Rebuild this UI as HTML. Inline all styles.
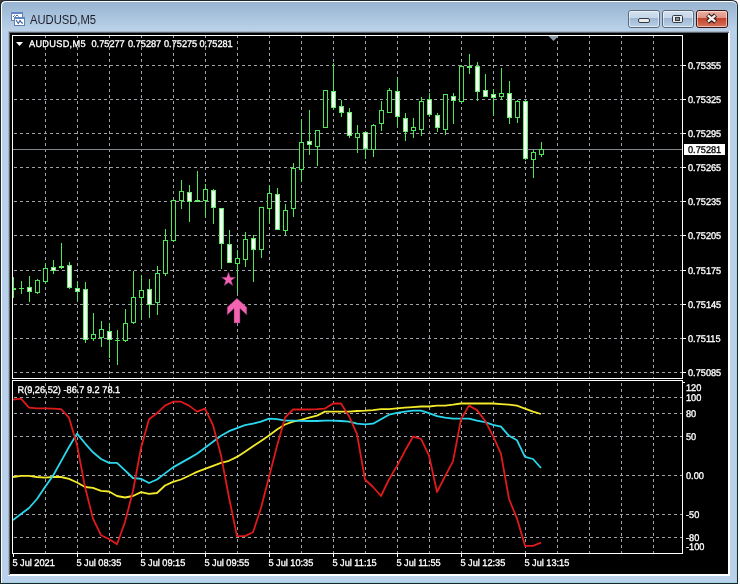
<!DOCTYPE html>
<html><head><meta charset="utf-8"><style>
html,body{margin:0;padding:0;width:740px;height:584px;overflow:hidden;background:#f0f0f0}
svg text{font-family:"Liberation Sans",sans-serif}
svg{will-change:transform}
</style></head><body>
<svg width="740" height="584" viewBox="0 0 740 584" style="position:absolute;left:0;top:0">
<defs><linearGradient id="tb" x1="0" y1="0" x2="0" y2="1"><stop offset="0" stop-color="#98b4d0"/><stop offset="1" stop-color="#bbd3ea"/></linearGradient><linearGradient id="bmin" x1="0" y1="0" x2="0" y2="1"><stop offset="0" stop-color="#d3e1f0"/><stop offset="0.45" stop-color="#c4d6ea"/><stop offset="0.46" stop-color="#9fb7d3"/><stop offset="1" stop-color="#bcd2ea"/></linearGradient><linearGradient id="bcls" x1="0" y1="0" x2="0" y2="1"><stop offset="0" stop-color="#eab0a4"/><stop offset="0.45" stop-color="#de9484"/><stop offset="0.46" stop-color="#c2412a"/><stop offset="1" stop-color="#d8775e"/></linearGradient></defs>
<rect x="0" y="0" width="740" height="584" fill="#ffffff"/>
<rect x="0" y="0" width="8" height="584" fill="#3a3a3a"/>
<path d="M0,584 L0,6 Q0,0 6,0 L732,0 Q738,0 738,6 L738,584 Z" fill="#1a2630"/>
<path d="M1,583 L1,6 Q1,1 6,1 L731,1 Q737,1 737,6 L737,583 Z" fill="#ffffff"/>
<path d="M2,582 L2,7 Q2,2 7,2 L730,2 Q737,2 737,7 L737,582 Z" fill="#b9d1ea"/>
<path d="M2,31 L2,7 Q2,2 7,2 L730,2 Q737,2 737,7 L737,31 Z" fill="url(#tb)"/>
<rect x="736" y="6" width="1" height="577" fill="#a8d4e0"/>
<rect x="2" y="582" width="735" height="1" fill="#a0d2dc"/>
<rect x="8" y="31" width="722" height="545" fill="#ffffff"/>
<rect x="8" y="31" width="721" height="1" fill="#a6b4c2"/>
<rect x="8" y="31" width="1" height="544" fill="#a6b4c2"/>
<rect x="9" y="32" width="720" height="1" fill="#5a6470"/>
<rect x="9" y="32" width="1" height="543" fill="#5a6470"/>
<rect x="10" y="33" width="718" height="541" fill="#000000"/>
<text x="30" y="23.6" font-size="12" fill="#1e1e2a" textLength="66" lengthAdjust="spacingAndGlyphs">AUDUSD,M5</text>
<g shape-rendering="crispEdges"><rect x="11.5" y="12.5" width="11" height="8" fill="#ffffff" stroke="#5d7fb6"/><rect x="11" y="12" width="12" height="2" fill="#5f86c8"/><rect x="14.5" y="17.5" width="10" height="8" fill="#ffffff" stroke="#5d7fb6"/><rect x="14" y="17" width="11" height="2" fill="#5f86c8"/></g>
<polyline points="13,17 14.5,15.5 15.5,16.5 17,15 18.5,16.5" fill="none" stroke="#4a6aa0" stroke-width="1"/>
<polyline points="16,20 18.3,23.5 20,20.5 21.5,22.5 22.8,23.5" fill="none" stroke="#3f5f98" stroke-width="1.1"/>
<rect x="628.5" y="10.5" width="31" height="17" rx="2.5" fill="url(#bmin)" stroke="#5c6a7c"/>
<rect x="629.5" y="11.5" width="29" height="15" rx="1.5" fill="none" stroke="#ffffff" stroke-opacity="0.55"/>
<rect x="662.5" y="10.5" width="31" height="17" rx="2.5" fill="url(#bmin)" stroke="#5c6a7c"/>
<rect x="663.5" y="11.5" width="29" height="15" rx="1.5" fill="none" stroke="#ffffff" stroke-opacity="0.55"/>
<rect x="696.5" y="10.5" width="31" height="17" rx="2.5" fill="url(#bcls)" stroke="#3a1010"/>
<rect x="697.5" y="11.5" width="29" height="15" rx="1.5" fill="none" stroke="#ffffff" stroke-opacity="0.55"/>
<rect x="638.5" y="18.5" width="11" height="4" rx="1.5" fill="#ececec" stroke="#333a44"/>
<rect x="672.5" y="15.5" width="10" height="7" rx="1.2" fill="#ececec" stroke="#333a44"/>
<rect x="675.5" y="17.5" width="4" height="3" fill="#8090a0" stroke="#333a44" stroke-width="1"/>
<g stroke-linecap="butt"><path d="M707.6,15 L715.6,22 M715.6,15 L707.6,22" stroke="#2e1518" stroke-width="4.4"/><path d="M707.9,15.3 L715.3,21.7 M715.3,15.3 L707.9,21.7" stroke="#f4f0f0" stroke-width="2.4"/></g>
<g shape-rendering="crispEdges">
<line x1="13" y1="65.5" x2="682" y2="65.5" stroke="#9ea3aa" stroke-width="1" stroke-dasharray="3 3" stroke-dashoffset="5"/>
<line x1="13" y1="99.5" x2="682" y2="99.5" stroke="#9ea3aa" stroke-width="1" stroke-dasharray="3 3" stroke-dashoffset="5"/>
<line x1="13" y1="133.5" x2="682" y2="133.5" stroke="#9ea3aa" stroke-width="1" stroke-dasharray="3 3" stroke-dashoffset="5"/>
<line x1="13" y1="167.5" x2="682" y2="167.5" stroke="#9ea3aa" stroke-width="1" stroke-dasharray="3 3" stroke-dashoffset="5"/>
<line x1="13" y1="201.5" x2="682" y2="201.5" stroke="#9ea3aa" stroke-width="1" stroke-dasharray="3 3" stroke-dashoffset="5"/>
<line x1="13" y1="235.5" x2="682" y2="235.5" stroke="#9ea3aa" stroke-width="1" stroke-dasharray="3 3" stroke-dashoffset="5"/>
<line x1="13" y1="270.5" x2="682" y2="270.5" stroke="#9ea3aa" stroke-width="1" stroke-dasharray="3 3" stroke-dashoffset="5"/>
<line x1="13" y1="304.5" x2="682" y2="304.5" stroke="#9ea3aa" stroke-width="1" stroke-dasharray="3 3" stroke-dashoffset="5"/>
<line x1="13" y1="338.5" x2="682" y2="338.5" stroke="#9ea3aa" stroke-width="1" stroke-dasharray="3 3" stroke-dashoffset="5"/>
<line x1="13" y1="372.5" x2="682" y2="372.5" stroke="#9ea3aa" stroke-width="1" stroke-dasharray="3 3" stroke-dashoffset="5"/>
<line x1="45.5" y1="36" x2="45.5" y2="378" stroke="#9ea3aa" stroke-width="1" stroke-dasharray="3 3" stroke-dashoffset="1"/>
<line x1="77.5" y1="36" x2="77.5" y2="378" stroke="#9ea3aa" stroke-width="1" stroke-dasharray="3 3" stroke-dashoffset="1"/>
<line x1="109.5" y1="36" x2="109.5" y2="378" stroke="#9ea3aa" stroke-width="1" stroke-dasharray="3 3" stroke-dashoffset="1"/>
<line x1="141.5" y1="36" x2="141.5" y2="378" stroke="#9ea3aa" stroke-width="1" stroke-dasharray="3 3" stroke-dashoffset="1"/>
<line x1="173.5" y1="36" x2="173.5" y2="378" stroke="#9ea3aa" stroke-width="1" stroke-dasharray="3 3" stroke-dashoffset="1"/>
<line x1="205.5" y1="36" x2="205.5" y2="378" stroke="#9ea3aa" stroke-width="1" stroke-dasharray="3 3" stroke-dashoffset="1"/>
<line x1="237.5" y1="36" x2="237.5" y2="378" stroke="#9ea3aa" stroke-width="1" stroke-dasharray="3 3" stroke-dashoffset="1"/>
<line x1="269.5" y1="36" x2="269.5" y2="378" stroke="#9ea3aa" stroke-width="1" stroke-dasharray="3 3" stroke-dashoffset="1"/>
<line x1="301.5" y1="36" x2="301.5" y2="378" stroke="#9ea3aa" stroke-width="1" stroke-dasharray="3 3" stroke-dashoffset="1"/>
<line x1="333.5" y1="36" x2="333.5" y2="378" stroke="#9ea3aa" stroke-width="1" stroke-dasharray="3 3" stroke-dashoffset="1"/>
<line x1="365.5" y1="36" x2="365.5" y2="378" stroke="#9ea3aa" stroke-width="1" stroke-dasharray="3 3" stroke-dashoffset="1"/>
<line x1="397.5" y1="36" x2="397.5" y2="378" stroke="#9ea3aa" stroke-width="1" stroke-dasharray="3 3" stroke-dashoffset="1"/>
<line x1="429.5" y1="36" x2="429.5" y2="378" stroke="#9ea3aa" stroke-width="1" stroke-dasharray="3 3" stroke-dashoffset="1"/>
<line x1="461.5" y1="36" x2="461.5" y2="378" stroke="#9ea3aa" stroke-width="1" stroke-dasharray="3 3" stroke-dashoffset="1"/>
<line x1="493.5" y1="36" x2="493.5" y2="378" stroke="#9ea3aa" stroke-width="1" stroke-dasharray="3 3" stroke-dashoffset="1"/>
<line x1="525.5" y1="36" x2="525.5" y2="378" stroke="#9ea3aa" stroke-width="1" stroke-dasharray="3 3" stroke-dashoffset="1"/>
<line x1="557.5" y1="36" x2="557.5" y2="378" stroke="#9ea3aa" stroke-width="1" stroke-dasharray="3 3" stroke-dashoffset="1"/>
<line x1="589.5" y1="36" x2="589.5" y2="378" stroke="#9ea3aa" stroke-width="1" stroke-dasharray="3 3" stroke-dashoffset="1"/>
<line x1="621.5" y1="36" x2="621.5" y2="378" stroke="#9ea3aa" stroke-width="1" stroke-dasharray="3 3" stroke-dashoffset="1"/>
<line x1="653.5" y1="36" x2="653.5" y2="378" stroke="#9ea3aa" stroke-width="1" stroke-dasharray="3 3" stroke-dashoffset="1"/>
<line x1="13" y1="397.5" x2="682" y2="397.5" stroke="#9ea3aa" stroke-width="1" stroke-dasharray="3 3" stroke-dashoffset="5"/>
<line x1="13" y1="413.5" x2="682" y2="413.5" stroke="#9ea3aa" stroke-width="1" stroke-dasharray="3 3" stroke-dashoffset="5"/>
<line x1="13" y1="436.5" x2="682" y2="436.5" stroke="#9ea3aa" stroke-width="1" stroke-dasharray="3 3" stroke-dashoffset="5"/>
<line x1="13" y1="475.5" x2="682" y2="475.5" stroke="#9ea3aa" stroke-width="1" stroke-dasharray="3 3" stroke-dashoffset="5"/>
<line x1="13" y1="514.5" x2="682" y2="514.5" stroke="#9ea3aa" stroke-width="1" stroke-dasharray="3 3" stroke-dashoffset="5"/>
<line x1="13" y1="537.5" x2="682" y2="537.5" stroke="#9ea3aa" stroke-width="1" stroke-dasharray="3 3" stroke-dashoffset="5"/>
<line x1="45.5" y1="382" x2="45.5" y2="553" stroke="#9ea3aa" stroke-width="1" stroke-dasharray="3 3" stroke-dashoffset="5"/>
<line x1="77.5" y1="382" x2="77.5" y2="553" stroke="#9ea3aa" stroke-width="1" stroke-dasharray="3 3" stroke-dashoffset="5"/>
<line x1="109.5" y1="382" x2="109.5" y2="553" stroke="#9ea3aa" stroke-width="1" stroke-dasharray="3 3" stroke-dashoffset="5"/>
<line x1="141.5" y1="382" x2="141.5" y2="553" stroke="#9ea3aa" stroke-width="1" stroke-dasharray="3 3" stroke-dashoffset="5"/>
<line x1="173.5" y1="382" x2="173.5" y2="553" stroke="#9ea3aa" stroke-width="1" stroke-dasharray="3 3" stroke-dashoffset="5"/>
<line x1="205.5" y1="382" x2="205.5" y2="553" stroke="#9ea3aa" stroke-width="1" stroke-dasharray="3 3" stroke-dashoffset="5"/>
<line x1="237.5" y1="382" x2="237.5" y2="553" stroke="#9ea3aa" stroke-width="1" stroke-dasharray="3 3" stroke-dashoffset="5"/>
<line x1="269.5" y1="382" x2="269.5" y2="553" stroke="#9ea3aa" stroke-width="1" stroke-dasharray="3 3" stroke-dashoffset="5"/>
<line x1="301.5" y1="382" x2="301.5" y2="553" stroke="#9ea3aa" stroke-width="1" stroke-dasharray="3 3" stroke-dashoffset="5"/>
<line x1="333.5" y1="382" x2="333.5" y2="553" stroke="#9ea3aa" stroke-width="1" stroke-dasharray="3 3" stroke-dashoffset="5"/>
<line x1="365.5" y1="382" x2="365.5" y2="553" stroke="#9ea3aa" stroke-width="1" stroke-dasharray="3 3" stroke-dashoffset="5"/>
<line x1="397.5" y1="382" x2="397.5" y2="553" stroke="#9ea3aa" stroke-width="1" stroke-dasharray="3 3" stroke-dashoffset="5"/>
<line x1="429.5" y1="382" x2="429.5" y2="553" stroke="#9ea3aa" stroke-width="1" stroke-dasharray="3 3" stroke-dashoffset="5"/>
<line x1="461.5" y1="382" x2="461.5" y2="553" stroke="#9ea3aa" stroke-width="1" stroke-dasharray="3 3" stroke-dashoffset="5"/>
<line x1="493.5" y1="382" x2="493.5" y2="553" stroke="#9ea3aa" stroke-width="1" stroke-dasharray="3 3" stroke-dashoffset="5"/>
<line x1="525.5" y1="382" x2="525.5" y2="553" stroke="#9ea3aa" stroke-width="1" stroke-dasharray="3 3" stroke-dashoffset="5"/>
<line x1="557.5" y1="382" x2="557.5" y2="553" stroke="#9ea3aa" stroke-width="1" stroke-dasharray="3 3" stroke-dashoffset="5"/>
<line x1="589.5" y1="382" x2="589.5" y2="553" stroke="#9ea3aa" stroke-width="1" stroke-dasharray="3 3" stroke-dashoffset="5"/>
<line x1="621.5" y1="382" x2="621.5" y2="553" stroke="#9ea3aa" stroke-width="1" stroke-dasharray="3 3" stroke-dashoffset="5"/>
<line x1="653.5" y1="382" x2="653.5" y2="553" stroke="#9ea3aa" stroke-width="1" stroke-dasharray="3 3" stroke-dashoffset="5"/>
</g>
<rect x="13" y="149" width="669" height="1" fill="#80878f"/>
<g shape-rendering="crispEdges">
<rect x="13" y="277" width="1" height="21" fill="#4ee654"/>
<rect x="11" y="288" width="5" height="2" fill="#4ee654"/>
<rect x="21" y="281" width="1" height="13" fill="#4ee654"/>
<rect x="19" y="288" width="5" height="1" fill="#4ee654"/>
<rect x="29" y="276" width="1" height="26" fill="#4ee654"/>
<rect x="27" y="287" width="5" height="5" fill="#62ec68"/>
<rect x="28" y="288" width="3" height="3" fill="#f2fff2"/>
<rect x="37" y="279" width="1" height="15" fill="#4ee654"/>
<rect x="35" y="280" width="5" height="13" fill="#4ee654"/>
<rect x="36" y="281" width="3" height="11" fill="#000000"/>
<rect x="45" y="263" width="1" height="21" fill="#4ee654"/>
<rect x="43" y="268" width="5" height="14" fill="#4ee654"/>
<rect x="44" y="269" width="3" height="12" fill="#000000"/>
<rect x="53" y="260" width="1" height="14" fill="#4ee654"/>
<rect x="51" y="267" width="5" height="4" fill="#62ec68"/>
<rect x="52" y="268" width="3" height="2" fill="#f2fff2"/>
<rect x="61" y="243" width="1" height="26" fill="#4ee654"/>
<rect x="59" y="266" width="5" height="2" fill="#62ec68"/>
<rect x="69" y="262" width="1" height="27" fill="#4ee654"/>
<rect x="67" y="265" width="5" height="23" fill="#62ec68"/>
<rect x="68" y="266" width="3" height="21" fill="#f2fff2"/>
<rect x="77" y="282" width="1" height="19" fill="#4ee654"/>
<rect x="75" y="288" width="5" height="4" fill="#62ec68"/>
<rect x="76" y="289" width="3" height="2" fill="#f2fff2"/>
<rect x="85" y="282" width="1" height="61" fill="#4ee654"/>
<rect x="83" y="289" width="5" height="51" fill="#62ec68"/>
<rect x="84" y="290" width="3" height="49" fill="#f2fff2"/>
<rect x="93" y="313" width="1" height="28" fill="#4ee654"/>
<rect x="91" y="334" width="5" height="5" fill="#4ee654"/>
<rect x="92" y="335" width="3" height="3" fill="#000000"/>
<rect x="101" y="321" width="1" height="26" fill="#4ee654"/>
<rect x="99" y="329" width="5" height="9" fill="#4ee654"/>
<rect x="100" y="330" width="3" height="7" fill="#000000"/>
<rect x="109" y="323" width="1" height="35" fill="#4ee654"/>
<rect x="107" y="331" width="5" height="9" fill="#62ec68"/>
<rect x="108" y="332" width="3" height="7" fill="#f2fff2"/>
<rect x="117" y="330" width="1" height="35" fill="#4ee654"/>
<rect x="115" y="340" width="5" height="1" fill="#4ee654"/>
<rect x="125" y="309" width="1" height="33" fill="#4ee654"/>
<rect x="123" y="323" width="5" height="18" fill="#4ee654"/>
<rect x="124" y="324" width="3" height="16" fill="#000000"/>
<rect x="133" y="271" width="1" height="53" fill="#4ee654"/>
<rect x="131" y="297" width="5" height="26" fill="#4ee654"/>
<rect x="132" y="298" width="3" height="24" fill="#000000"/>
<rect x="141" y="275" width="1" height="45" fill="#4ee654"/>
<rect x="139" y="290" width="5" height="8" fill="#4ee654"/>
<rect x="140" y="291" width="3" height="6" fill="#000000"/>
<rect x="149" y="279" width="1" height="39" fill="#4ee654"/>
<rect x="147" y="289" width="5" height="16" fill="#62ec68"/>
<rect x="148" y="290" width="3" height="14" fill="#f2fff2"/>
<rect x="157" y="266" width="1" height="49" fill="#4ee654"/>
<rect x="155" y="273" width="5" height="30" fill="#4ee654"/>
<rect x="156" y="274" width="3" height="28" fill="#000000"/>
<rect x="165" y="229" width="1" height="47" fill="#4ee654"/>
<rect x="163" y="240" width="5" height="34" fill="#4ee654"/>
<rect x="164" y="241" width="3" height="32" fill="#000000"/>
<rect x="173" y="198" width="1" height="44" fill="#4ee654"/>
<rect x="171" y="200" width="5" height="41" fill="#4ee654"/>
<rect x="172" y="201" width="3" height="39" fill="#000000"/>
<rect x="181" y="180" width="1" height="29" fill="#4ee654"/>
<rect x="179" y="191" width="5" height="10" fill="#4ee654"/>
<rect x="180" y="192" width="3" height="8" fill="#000000"/>
<rect x="189" y="185" width="1" height="37" fill="#4ee654"/>
<rect x="187" y="192" width="5" height="10" fill="#62ec68"/>
<rect x="188" y="193" width="3" height="8" fill="#f2fff2"/>
<rect x="197" y="171" width="1" height="31" fill="#4ee654"/>
<rect x="195" y="200" width="5" height="2" fill="#62ec68"/>
<rect x="205" y="184" width="1" height="34" fill="#4ee654"/>
<rect x="203" y="189" width="5" height="12" fill="#4ee654"/>
<rect x="204" y="190" width="3" height="10" fill="#000000"/>
<rect x="213" y="189" width="1" height="35" fill="#4ee654"/>
<rect x="211" y="190" width="5" height="18" fill="#62ec68"/>
<rect x="212" y="191" width="3" height="16" fill="#f2fff2"/>
<rect x="221" y="208" width="1" height="61" fill="#4ee654"/>
<rect x="219" y="208" width="5" height="36" fill="#62ec68"/>
<rect x="220" y="209" width="3" height="34" fill="#f2fff2"/>
<rect x="229" y="230" width="1" height="33" fill="#4ee654"/>
<rect x="227" y="244" width="5" height="19" fill="#62ec68"/>
<rect x="228" y="245" width="3" height="17" fill="#f2fff2"/>
<rect x="237" y="250" width="1" height="43" fill="#4ee654"/>
<rect x="235" y="258" width="5" height="6" fill="#4ee654"/>
<rect x="236" y="259" width="3" height="4" fill="#000000"/>
<rect x="245" y="232" width="1" height="35" fill="#4ee654"/>
<rect x="243" y="239" width="5" height="21" fill="#4ee654"/>
<rect x="244" y="240" width="3" height="19" fill="#000000"/>
<rect x="253" y="235" width="1" height="47" fill="#4ee654"/>
<rect x="251" y="238" width="5" height="12" fill="#62ec68"/>
<rect x="252" y="239" width="3" height="10" fill="#f2fff2"/>
<rect x="261" y="207" width="1" height="51" fill="#4ee654"/>
<rect x="259" y="207" width="5" height="43" fill="#4ee654"/>
<rect x="260" y="208" width="3" height="41" fill="#000000"/>
<rect x="269" y="185" width="1" height="39" fill="#4ee654"/>
<rect x="267" y="193" width="5" height="16" fill="#4ee654"/>
<rect x="268" y="194" width="3" height="14" fill="#000000"/>
<rect x="277" y="188" width="1" height="42" fill="#4ee654"/>
<rect x="275" y="194" width="5" height="36" fill="#62ec68"/>
<rect x="276" y="195" width="3" height="34" fill="#f2fff2"/>
<rect x="285" y="204" width="1" height="31" fill="#4ee654"/>
<rect x="283" y="210" width="5" height="21" fill="#4ee654"/>
<rect x="284" y="211" width="3" height="19" fill="#000000"/>
<rect x="293" y="163" width="1" height="54" fill="#4ee654"/>
<rect x="291" y="168" width="5" height="41" fill="#4ee654"/>
<rect x="292" y="169" width="3" height="39" fill="#000000"/>
<rect x="301" y="119" width="1" height="63" fill="#4ee654"/>
<rect x="299" y="142" width="5" height="28" fill="#4ee654"/>
<rect x="300" y="143" width="3" height="26" fill="#000000"/>
<rect x="309" y="110" width="1" height="45" fill="#4ee654"/>
<rect x="307" y="141" width="5" height="4" fill="#62ec68"/>
<rect x="308" y="142" width="3" height="2" fill="#f2fff2"/>
<rect x="317" y="130" width="1" height="36" fill="#4ee654"/>
<rect x="315" y="130" width="5" height="17" fill="#4ee654"/>
<rect x="316" y="131" width="3" height="15" fill="#000000"/>
<rect x="325" y="90" width="1" height="38" fill="#4ee654"/>
<rect x="323" y="90" width="5" height="38" fill="#4ee654"/>
<rect x="324" y="91" width="3" height="36" fill="#000000"/>
<rect x="333" y="63" width="1" height="47" fill="#4ee654"/>
<rect x="331" y="91" width="5" height="17" fill="#62ec68"/>
<rect x="332" y="92" width="3" height="15" fill="#f2fff2"/>
<rect x="341" y="100" width="1" height="17" fill="#4ee654"/>
<rect x="339" y="106" width="5" height="7" fill="#62ec68"/>
<rect x="340" y="107" width="3" height="5" fill="#f2fff2"/>
<rect x="349" y="108" width="1" height="30" fill="#4ee654"/>
<rect x="347" y="112" width="5" height="24" fill="#62ec68"/>
<rect x="348" y="113" width="3" height="22" fill="#f2fff2"/>
<rect x="357" y="125" width="1" height="28" fill="#4ee654"/>
<rect x="355" y="133" width="5" height="5" fill="#4ee654"/>
<rect x="356" y="134" width="3" height="3" fill="#000000"/>
<rect x="365" y="132" width="1" height="27" fill="#4ee654"/>
<rect x="363" y="132" width="5" height="17" fill="#62ec68"/>
<rect x="364" y="133" width="3" height="15" fill="#f2fff2"/>
<rect x="373" y="124" width="1" height="33" fill="#4ee654"/>
<rect x="371" y="125" width="5" height="25" fill="#4ee654"/>
<rect x="372" y="126" width="3" height="23" fill="#000000"/>
<rect x="381" y="101" width="1" height="30" fill="#4ee654"/>
<rect x="379" y="110" width="5" height="14" fill="#4ee654"/>
<rect x="380" y="111" width="3" height="12" fill="#000000"/>
<rect x="389" y="88" width="1" height="25" fill="#4ee654"/>
<rect x="387" y="90" width="5" height="23" fill="#4ee654"/>
<rect x="388" y="91" width="3" height="21" fill="#000000"/>
<rect x="397" y="77" width="1" height="50" fill="#4ee654"/>
<rect x="395" y="91" width="5" height="26" fill="#62ec68"/>
<rect x="396" y="92" width="3" height="24" fill="#f2fff2"/>
<rect x="405" y="113" width="1" height="28" fill="#4ee654"/>
<rect x="403" y="118" width="5" height="14" fill="#62ec68"/>
<rect x="404" y="119" width="3" height="12" fill="#f2fff2"/>
<rect x="413" y="118" width="1" height="20" fill="#4ee654"/>
<rect x="411" y="127" width="5" height="4" fill="#4ee654"/>
<rect x="412" y="128" width="3" height="2" fill="#000000"/>
<rect x="421" y="97" width="1" height="39" fill="#4ee654"/>
<rect x="419" y="101" width="5" height="29" fill="#4ee654"/>
<rect x="420" y="102" width="3" height="27" fill="#000000"/>
<rect x="429" y="93" width="1" height="24" fill="#4ee654"/>
<rect x="427" y="99" width="5" height="16" fill="#62ec68"/>
<rect x="428" y="100" width="3" height="14" fill="#f2fff2"/>
<rect x="437" y="113" width="1" height="19" fill="#4ee654"/>
<rect x="435" y="115" width="5" height="13" fill="#62ec68"/>
<rect x="436" y="116" width="3" height="11" fill="#f2fff2"/>
<rect x="445" y="94" width="1" height="41" fill="#4ee654"/>
<rect x="443" y="94" width="5" height="36" fill="#4ee654"/>
<rect x="444" y="95" width="3" height="34" fill="#000000"/>
<rect x="453" y="93" width="1" height="31" fill="#4ee654"/>
<rect x="451" y="96" width="5" height="5" fill="#62ec68"/>
<rect x="452" y="97" width="3" height="3" fill="#f2fff2"/>
<rect x="461" y="65" width="1" height="38" fill="#4ee654"/>
<rect x="459" y="66" width="5" height="36" fill="#4ee654"/>
<rect x="460" y="67" width="3" height="34" fill="#000000"/>
<rect x="469" y="54" width="1" height="20" fill="#4ee654"/>
<rect x="467" y="66" width="5" height="2" fill="#62ec68"/>
<rect x="477" y="62" width="1" height="39" fill="#4ee654"/>
<rect x="475" y="66" width="5" height="26" fill="#62ec68"/>
<rect x="476" y="67" width="3" height="24" fill="#f2fff2"/>
<rect x="485" y="74" width="1" height="23" fill="#4ee654"/>
<rect x="483" y="90" width="5" height="7" fill="#62ec68"/>
<rect x="484" y="91" width="3" height="5" fill="#f2fff2"/>
<rect x="493" y="89" width="1" height="27" fill="#4ee654"/>
<rect x="491" y="94" width="5" height="4" fill="#62ec68"/>
<rect x="492" y="95" width="3" height="2" fill="#f2fff2"/>
<rect x="501" y="68" width="1" height="32" fill="#4ee654"/>
<rect x="499" y="93" width="5" height="4" fill="#4ee654"/>
<rect x="500" y="94" width="3" height="2" fill="#000000"/>
<rect x="509" y="81" width="1" height="43" fill="#4ee654"/>
<rect x="507" y="93" width="5" height="25" fill="#62ec68"/>
<rect x="508" y="94" width="3" height="23" fill="#f2fff2"/>
<rect x="517" y="100" width="1" height="23" fill="#4ee654"/>
<rect x="515" y="101" width="5" height="17" fill="#4ee654"/>
<rect x="516" y="102" width="3" height="15" fill="#000000"/>
<rect x="525" y="100" width="1" height="60" fill="#4ee654"/>
<rect x="523" y="101" width="5" height="58" fill="#62ec68"/>
<rect x="524" y="102" width="3" height="56" fill="#f2fff2"/>
<rect x="533" y="150" width="1" height="28" fill="#4ee654"/>
<rect x="531" y="152" width="5" height="8" fill="#4ee654"/>
<rect x="532" y="153" width="3" height="6" fill="#000000"/>
<rect x="541" y="142" width="1" height="15" fill="#4ee654"/>
<rect x="539" y="149" width="5" height="6" fill="#4ee654"/>
<rect x="540" y="150" width="3" height="4" fill="#000000"/>
</g>
<g shape-rendering="crispEdges">
<rect x="10" y="35" width="3" height="344" fill="#000"/>
<rect x="12" y="35" width="1" height="344" fill="#ffffff"/>
<rect x="12" y="35" width="671" height="1" fill="#ffffff"/>
<rect x="682" y="35" width="1" height="344" fill="#ffffff"/>
<rect x="12" y="378" width="671" height="1" fill="#ffffff"/>
<rect x="12" y="380" width="1" height="174" fill="#ffffff"/>
<rect x="12" y="380" width="671" height="1" fill="#ffffff"/>
<rect x="682" y="380" width="1" height="174" fill="#ffffff"/>
<rect x="12" y="553" width="671" height="1" fill="#ffffff"/>
<rect x="683" y="65" width="3" height="1" fill="#ffffff"/>
<rect x="683" y="99" width="3" height="1" fill="#ffffff"/>
<rect x="683" y="133" width="3" height="1" fill="#ffffff"/>
<rect x="683" y="167" width="3" height="1" fill="#ffffff"/>
<rect x="683" y="201" width="3" height="1" fill="#ffffff"/>
<rect x="683" y="235" width="3" height="1" fill="#ffffff"/>
<rect x="683" y="270" width="3" height="1" fill="#ffffff"/>
<rect x="683" y="304" width="3" height="1" fill="#ffffff"/>
<rect x="683" y="338" width="3" height="1" fill="#ffffff"/>
<rect x="683" y="372" width="3" height="1" fill="#ffffff"/>
<rect x="683" y="382" width="2" height="1" fill="#ffffff"/>
<rect x="13" y="554" width="1" height="3" fill="#ffffff"/>
<rect x="77" y="554" width="1" height="3" fill="#ffffff"/>
<rect x="141" y="554" width="1" height="3" fill="#ffffff"/>
<rect x="205" y="554" width="1" height="3" fill="#ffffff"/>
<rect x="269" y="554" width="1" height="3" fill="#ffffff"/>
<rect x="333" y="554" width="1" height="3" fill="#ffffff"/>
<rect x="397" y="554" width="1" height="3" fill="#ffffff"/>
<rect x="461" y="554" width="1" height="3" fill="#ffffff"/>
<rect x="525" y="554" width="1" height="3" fill="#ffffff"/>
</g>
<polygon points="548.5,36 558.5,36 553.5,41" fill="#8e9aa8"/>
<svg x="13" y="382" width="669" height="171" viewBox="13 382 669 171" overflow="hidden">
<polyline points="13,477.0 21,475.8 29,475.8 37,477.0 45,477.6 53,477.0 61,477.0 69,478.9 77,482.5 85,487.0 93,487.9 101,490.9 109,491.5 117,496.0 125,497.5 133,496.0 141,492.1 149,493.9 157,493.0 165,485.5 173,481.9 181,479.5 189,475.8 197,471.9 205,468.9 213,465.9 221,462.9 229,460.8 237,456.9 245,451.7 253,446.3 261,441.0 269,435.5 277,429.5 285,424.5 293,421.6 301,419.8 309,417.7 317,415.6 325,411.6 333,411.6 341,411.6 349,411.6 357,411.0 365,410.7 373,410.1 381,409.2 389,409.2 397,408.3 405,407.7 413,407.1 421,406.5 429,406.5 437,405.6 445,405.6 453,404.7 461,403.5 469,403.5 477,403.5 485,403.5 493,403.5 501,404.1 509,404.7 517,405.6 525,408.6 533,411.6 541,414.0" fill="none" stroke="#f2ea2a" stroke-width="1.8" stroke-linejoin="round"/>
<polyline points="13,520.1 21,514.0 29,508.0 37,499.0 45,487.0 53,475.8 61,461.4 69,447.0 77,433.6 85,443.3 93,452.3 101,459.0 109,462.9 117,462.9 125,470.4 133,478.0 141,478.9 149,483.0 157,479.5 165,473.4 173,467.4 181,462.9 189,458.4 197,453.8 205,447.8 213,441.8 221,435.8 229,431.2 237,428.2 245,425.2 253,423.7 261,421.6 269,418.6 277,419.2 285,420.7 293,420.7 301,420.9 309,421.0 317,421.0 325,420.7 333,420.7 341,421.0 349,421.6 357,423.7 365,424.3 373,423.7 381,419.2 389,414.7 397,412.9 405,411.6 413,410.7 421,410.7 429,413.2 437,416.2 445,417.7 453,418.6 461,418.6 469,418.6 477,420.7 485,422.2 493,424.9 501,426.7 509,435.8 517,440.3 525,456.9 533,459.0 541,468.0" fill="none" stroke="#2ad8ee" stroke-width="1.8" stroke-linejoin="round"/>
<polyline points="13,399.6 21,398.7 29,407.7 37,408.3 45,408.3 53,408.6 61,409.2 69,417.7 77,444.8 85,487.0 93,518.6 101,535.2 109,539.0 117,544.3 125,522.0 133,491.0 141,448.0 149,419.2 157,413.2 165,405.6 173,401.7 181,401.7 189,405.6 197,411.6 205,408.6 213,425.2 221,455.3 229,497.5 237,536.1 245,536.1 253,532.2 261,508.0 269,477.0 277,446.0 285,417.7 293,409.5 301,409.4 309,409.5 317,409.2 325,408.6 333,403.5 341,403.5 349,416.2 357,434.2 365,479.5 373,487.0 381,496.0 389,479.5 397,465.9 405,450.8 413,436.7 421,438.8 429,455.5 437,492.0 445,476.4 453,461.4 461,419.2 469,405.6 477,410.1 485,420.7 493,435.8 501,453.8 509,499.0 517,518.6 525,545.8 533,545.8 541,542.7" fill="none" stroke="#de1a1a" stroke-width="1.8" stroke-linejoin="round"/>
</svg>
<polygon points="228.5,272 230.3,277.2 235.6,277.3 231.3,280.6 232.9,285.8 228.5,282.6 224.1,285.8 225.7,280.6 221.4,277.3 226.7,277.2" fill="#f463b0" stroke="#5c2a64" stroke-width="0.6" stroke-opacity="0.8"/>
<polygon points="237,298.3 246.8,307.2 246.8,315 240,308.6 240,323 234,323 234,308.6 227.2,315 227.2,307.2" fill="#f463b0" stroke="#5c2a64" stroke-width="0.6" stroke-opacity="0.8"/>
<polygon points="16,42 23,42 19.5,46" fill="#ffffff"/>
<text textLength="56.5" lengthAdjust="spacing" x="29" y="47" text-rendering="geometricPrecision" transform="translate(0 47) scale(1 1.05) translate(0 -47)" font-size="9.2" fill="#ffffff" stroke="#ffffff" stroke-width="0.3" text-anchor="start">AUDUSD,M5</text>
<text x="91.5" y="47" text-rendering="geometricPrecision" transform="translate(0 47) scale(1 1.05) translate(0 -47)" font-size="9.2" fill="#ffffff" stroke="#ffffff" stroke-width="0.3" text-anchor="start">0.75277</text>
<text x="128" y="47" text-rendering="geometricPrecision" transform="translate(0 47) scale(1 1.05) translate(0 -47)" font-size="9.2" fill="#ffffff" stroke="#ffffff" stroke-width="0.3" text-anchor="start">0.75287</text>
<text x="164" y="47" text-rendering="geometricPrecision" transform="translate(0 47) scale(1 1.05) translate(0 -47)" font-size="9.2" fill="#ffffff" stroke="#ffffff" stroke-width="0.3" text-anchor="start">0.75275</text>
<text x="199.5" y="47" text-rendering="geometricPrecision" transform="translate(0 47) scale(1 1.05) translate(0 -47)" font-size="9.2" fill="#ffffff" stroke="#ffffff" stroke-width="0.3" text-anchor="start">0.75281</text>
<text x="688" y="69" text-rendering="geometricPrecision" transform="translate(0 69) scale(1 1.05) translate(0 -69)" font-size="9.2" fill="#ffffff" stroke="#ffffff" stroke-width="0.3" text-anchor="start">0.75355</text>
<text x="688" y="103" text-rendering="geometricPrecision" transform="translate(0 103) scale(1 1.05) translate(0 -103)" font-size="9.2" fill="#ffffff" stroke="#ffffff" stroke-width="0.3" text-anchor="start">0.75325</text>
<text x="688" y="137" text-rendering="geometricPrecision" transform="translate(0 137) scale(1 1.05) translate(0 -137)" font-size="9.2" fill="#ffffff" stroke="#ffffff" stroke-width="0.3" text-anchor="start">0.75295</text>
<text x="688" y="171" text-rendering="geometricPrecision" transform="translate(0 171) scale(1 1.05) translate(0 -171)" font-size="9.2" fill="#ffffff" stroke="#ffffff" stroke-width="0.3" text-anchor="start">0.75265</text>
<text x="688" y="205" text-rendering="geometricPrecision" transform="translate(0 205) scale(1 1.05) translate(0 -205)" font-size="9.2" fill="#ffffff" stroke="#ffffff" stroke-width="0.3" text-anchor="start">0.75235</text>
<text x="688" y="239" text-rendering="geometricPrecision" transform="translate(0 239) scale(1 1.05) translate(0 -239)" font-size="9.2" fill="#ffffff" stroke="#ffffff" stroke-width="0.3" text-anchor="start">0.75205</text>
<text x="688" y="274" text-rendering="geometricPrecision" transform="translate(0 274) scale(1 1.05) translate(0 -274)" font-size="9.2" fill="#ffffff" stroke="#ffffff" stroke-width="0.3" text-anchor="start">0.75175</text>
<text x="688" y="308" text-rendering="geometricPrecision" transform="translate(0 308) scale(1 1.05) translate(0 -308)" font-size="9.2" fill="#ffffff" stroke="#ffffff" stroke-width="0.3" text-anchor="start">0.75145</text>
<text x="688" y="342" text-rendering="geometricPrecision" transform="translate(0 342) scale(1 1.05) translate(0 -342)" font-size="9.2" fill="#ffffff" stroke="#ffffff" stroke-width="0.3" text-anchor="start">0.75115</text>
<text x="688" y="376" text-rendering="geometricPrecision" transform="translate(0 376) scale(1 1.05) translate(0 -376)" font-size="9.2" fill="#ffffff" stroke="#ffffff" stroke-width="0.3" text-anchor="start">0.75085</text>
<rect x="684" y="144" width="41" height="11" fill="#ffffff"/>
<text x="688" y="153" text-rendering="geometricPrecision" transform="translate(0 153) scale(1 1.05) translate(0 -153)" font-size="9.2" fill="#000000" stroke="#000000" stroke-width="0.3" text-anchor="start">0.75281</text>
<text x="686" y="391" text-rendering="geometricPrecision" transform="translate(0 391) scale(1 1.05) translate(0 -391)" font-size="9.2" fill="#ffffff" stroke="#ffffff" stroke-width="0.3" text-anchor="start">120</text>
<text x="686" y="401" text-rendering="geometricPrecision" transform="translate(0 401) scale(1 1.05) translate(0 -401)" font-size="9.2" fill="#ffffff" stroke="#ffffff" stroke-width="0.3" text-anchor="start">100</text>
<text x="686" y="417" text-rendering="geometricPrecision" transform="translate(0 417) scale(1 1.05) translate(0 -417)" font-size="9.2" fill="#ffffff" stroke="#ffffff" stroke-width="0.3" text-anchor="start">80</text>
<text x="686" y="440" text-rendering="geometricPrecision" transform="translate(0 440) scale(1 1.05) translate(0 -440)" font-size="9.2" fill="#ffffff" stroke="#ffffff" stroke-width="0.3" text-anchor="start">50</text>
<text x="686" y="479" text-rendering="geometricPrecision" transform="translate(0 479) scale(1 1.05) translate(0 -479)" font-size="9.2" fill="#ffffff" stroke="#ffffff" stroke-width="0.3" text-anchor="start">0.00</text>
<text x="686" y="518" text-rendering="geometricPrecision" transform="translate(0 518) scale(1 1.05) translate(0 -518)" font-size="9.2" fill="#ffffff" stroke="#ffffff" stroke-width="0.3" text-anchor="start">-50</text>
<text x="686" y="541" text-rendering="geometricPrecision" transform="translate(0 541) scale(1 1.05) translate(0 -541)" font-size="9.2" fill="#ffffff" stroke="#ffffff" stroke-width="0.3" text-anchor="start">-80</text>
<text x="686" y="550" text-rendering="geometricPrecision" transform="translate(0 550) scale(1 1.05) translate(0 -550)" font-size="9.2" fill="#ffffff" stroke="#ffffff" stroke-width="0.3" text-anchor="start">-100</text>
<text x="17.5" y="393" text-rendering="geometricPrecision" transform="translate(0 393) scale(1 1.05) translate(0 -393)" font-size="9.2" fill="#ffffff" stroke="#ffffff" stroke-width="0.3" text-anchor="start">R(9,26,52) -86.7 9.2 78.1</text>
<text x="12.4" y="566" text-rendering="geometricPrecision" transform="translate(0 566) scale(1 1.05) translate(0 -566)" font-size="9.2" fill="#ffffff" stroke="#ffffff" stroke-width="0.3" text-anchor="start">5 Jul 2021</text>
<text x="76.4" y="566" text-rendering="geometricPrecision" transform="translate(0 566) scale(1 1.05) translate(0 -566)" font-size="9.2" fill="#ffffff" stroke="#ffffff" stroke-width="0.3" text-anchor="start">5 Jul 08:35</text>
<text x="140.4" y="566" text-rendering="geometricPrecision" transform="translate(0 566) scale(1 1.05) translate(0 -566)" font-size="9.2" fill="#ffffff" stroke="#ffffff" stroke-width="0.3" text-anchor="start">5 Jul 09:15</text>
<text x="204.4" y="566" text-rendering="geometricPrecision" transform="translate(0 566) scale(1 1.05) translate(0 -566)" font-size="9.2" fill="#ffffff" stroke="#ffffff" stroke-width="0.3" text-anchor="start">5 Jul 09:55</text>
<text x="268.4" y="566" text-rendering="geometricPrecision" transform="translate(0 566) scale(1 1.05) translate(0 -566)" font-size="9.2" fill="#ffffff" stroke="#ffffff" stroke-width="0.3" text-anchor="start">5 Jul 10:35</text>
<text x="332.4" y="566" text-rendering="geometricPrecision" transform="translate(0 566) scale(1 1.05) translate(0 -566)" font-size="9.2" fill="#ffffff" stroke="#ffffff" stroke-width="0.3" text-anchor="start">5 Jul 11:15</text>
<text x="396.4" y="566" text-rendering="geometricPrecision" transform="translate(0 566) scale(1 1.05) translate(0 -566)" font-size="9.2" fill="#ffffff" stroke="#ffffff" stroke-width="0.3" text-anchor="start">5 Jul 11:55</text>
<text x="460.4" y="566" text-rendering="geometricPrecision" transform="translate(0 566) scale(1 1.05) translate(0 -566)" font-size="9.2" fill="#ffffff" stroke="#ffffff" stroke-width="0.3" text-anchor="start">5 Jul 12:35</text>
<text x="524.4" y="566" text-rendering="geometricPrecision" transform="translate(0 566) scale(1 1.05) translate(0 -566)" font-size="9.2" fill="#ffffff" stroke="#ffffff" stroke-width="0.3" text-anchor="start">5 Jul 13:15</text>
</svg>
</body></html>
